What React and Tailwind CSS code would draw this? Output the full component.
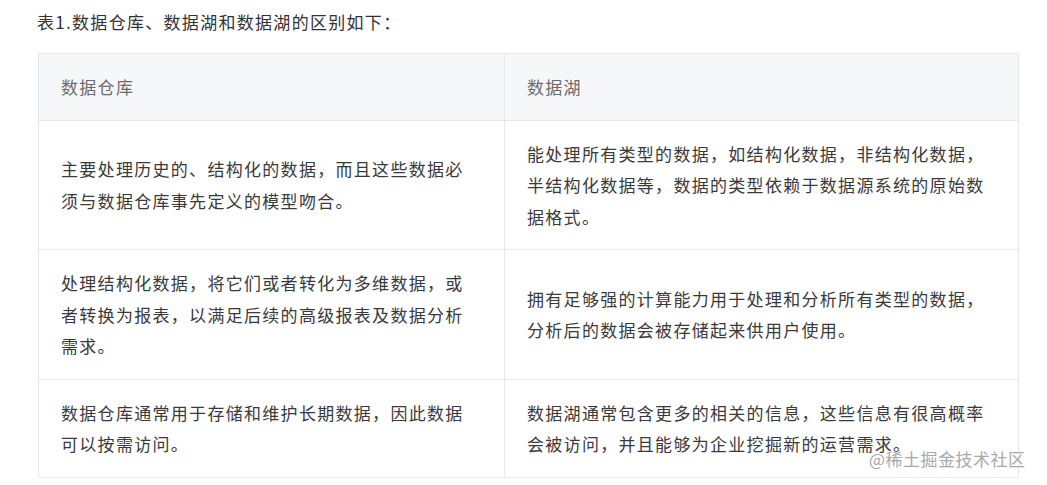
const rows = [
  {
    left: ['主要处理历史的、结构化的数据，而且这些数据必', '须与数据仓库事先定义的模型吻合。'],
    right: [
      '能处理所有类型的数据，如结构化数据，非结构化数据，',
      '半结构化数据等，数据的类型依赖于数据源系统的原始数',
      '据格式。',
    ],
  },
  {
    left: [
      '处理结构化数据，将它们或者转化为多维数据，或',
      '者转换为报表，以满足后续的高级报表及数据分析',
      '需求。',
    ],
    right: ['拥有足够强的计算能力用于处理和分析所有类型的数据，', '分析后的数据会被存储起来供用户使用。'],
  },
  {
    left: ['数据仓库通常用于存储和维护长期数据，因此数据', '可以按需访问。'],
    right: ['数据湖通常包含更多的相关的信息，这些信息有很高概率', '会被访问，并且能够为企业挖掘新的运营需求。'],
  },
];

function Lines({ lines }) {
  return lines.map((line, i) => (
    <span key={i} className="block whitespace-nowrap">
      {line}
    </span>
  ));
}

export default function App() {
  return (
    <div className="relative h-[485px] w-full overflow-hidden bg-white font-['Noto_Sans_CJK_SC','Noto_Sans',sans-serif] text-[17px] tracking-[1.3px] text-[#3a3a3a]">
      <p className="pl-[37px] pt-[6px] leading-[32px] text-[#333]">表1.数据仓库、数据湖和数据湖的区别如下：</p>

      <table className="ml-[38px] mt-[15px] w-[980px] table-fixed border-collapse border border-[#e6e8ec]">
        <colgroup>
          <col className="w-[466px]" />
          <col className="w-[514px]" />
        </colgroup>
        <thead>
          <tr className="bg-[#f6f7f9]">
            <th className="border border-[#e6e8ec] px-[22px] py-[17px] text-left font-normal leading-[31.5px] text-[#6b6b6b]">
              数据仓库
            </th>
            <th className="border border-[#e6e8ec] px-[22px] py-[17px] text-left font-normal leading-[31.5px] text-[#6b6b6b]">
              数据湖
            </th>
          </tr>
        </thead>
        <tbody>
          {rows.map((row, i) => (
            <tr key={i}>
              <td className="border border-[#e6e8ec] px-[22px] py-[17px] align-middle leading-[31.5px]">
                <Lines lines={row.left} />
              </td>
              <td className="border border-[#e6e8ec] px-[22px] py-[17px] align-middle leading-[31.5px]">
                <Lines lines={row.right} />
              </td>
            </tr>
          ))}
        </tbody>
      </table>

      <span className="absolute left-[869px] top-[446px] text-[17px] leading-[26px] tracking-[0.5px] text-[#a9a9a9] [text-shadow:0_0_2px_#ffffff]">
        @稀土掘金技术社区
      </span>
    </div>
  );
}
